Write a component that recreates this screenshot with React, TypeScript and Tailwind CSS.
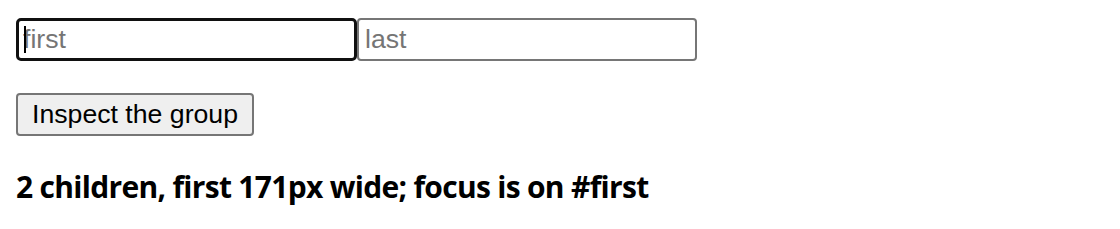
export default function App() {
  return (
    <div className="flex flex-col items-start px-4 pt-[18px] font-['Liberation_Sans',Arial,sans-serif] text-black">
      <div className="flex">
        <div className="relative">
          <input
            id="first"
            placeholder="first"
            className="h-[43px] w-[341px] rounded-[5px] border-[3px] border-[#101010] bg-white px-[4px] text-[26.67px] outline-none placeholder:text-[#757575]"
          />
          <span className="absolute left-[8px] top-[8px] h-[27px] w-[2px] bg-black" />
        </div>
        <input
          id="last"
          placeholder="last"
          className="h-[43px] w-[340px] rounded-[4px] border-2 border-[#767676] bg-white px-[6px] text-[26.67px] outline-none placeholder:text-[#757575]"
        />
      </div>
      <button className="mt-[32px] h-[43px] rounded-[4px] border-2 border-[#767676] bg-[#efefef] px-[14px] text-[26.67px] leading-none">
        Inspect the group
      </button>
      <p className="mt-[28px] font-['Open_Sans','Noto_Sans',sans-serif] text-[30px] font-bold tracking-[-0.7px] [font-variant-ligatures:none]">
        2 children, first 171px wide; focus is on #first
      </p>
    </div>
  );
}
